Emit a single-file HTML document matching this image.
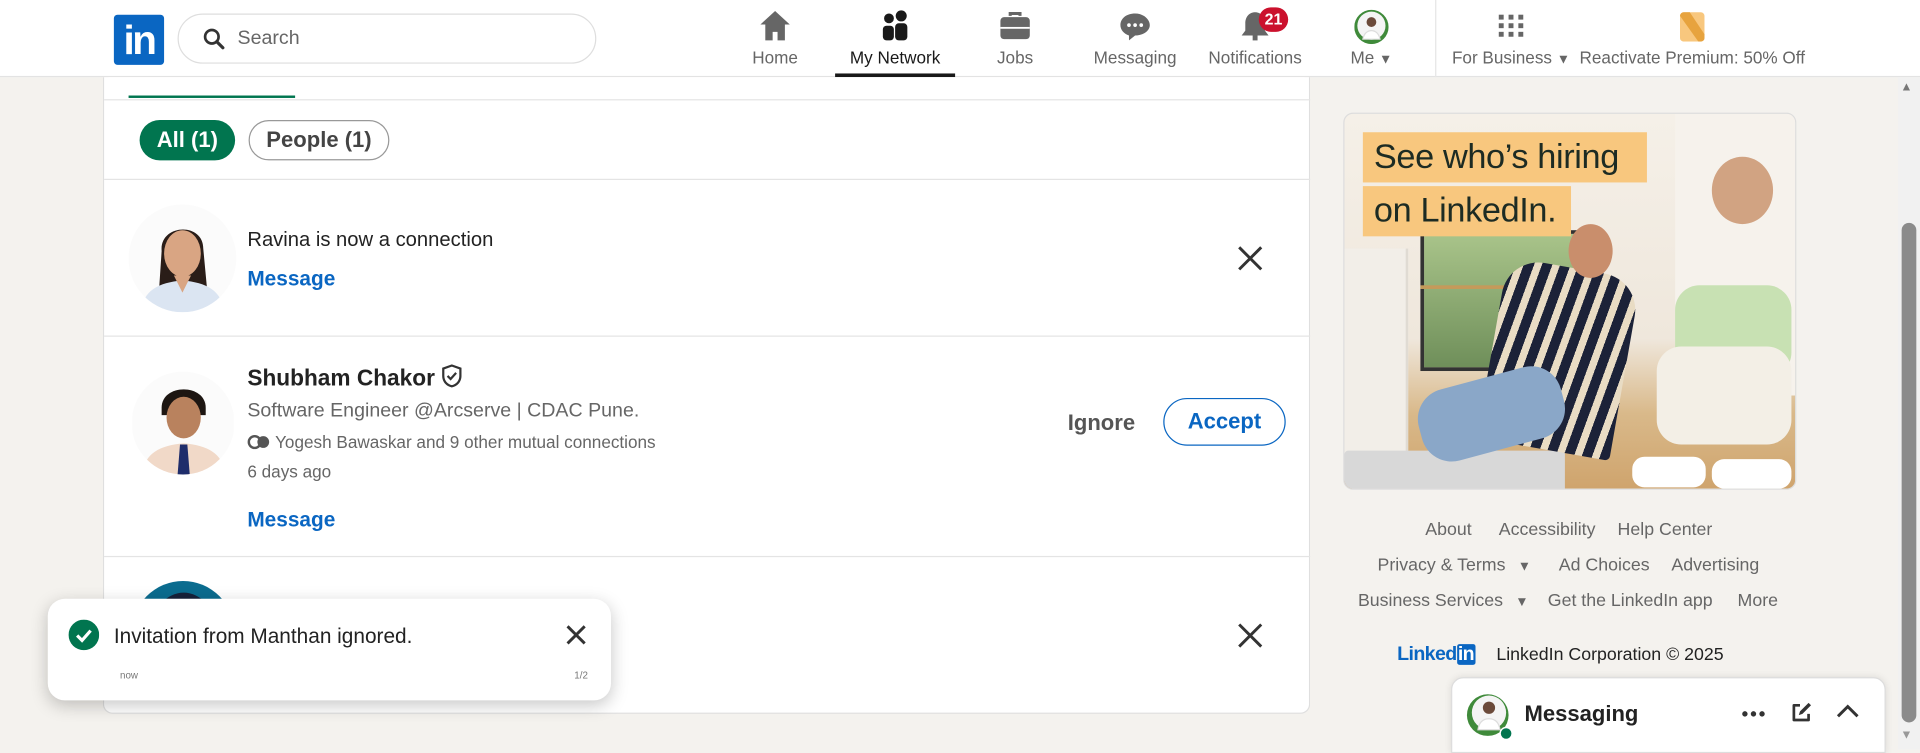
<!DOCTYPE html>
<html><head><meta charset="utf-8">
<style>
*{box-sizing:border-box;margin:0;padding:0}
html,body{width:1920px;height:749px;overflow:hidden;background:#f4f2ee;font-family:"Liberation Sans",sans-serif}
#w{position:absolute;left:0;top:0;width:1568px;height:612px;transform:scale(1.22449);transform-origin:0 0;background:#f4f2ee}
.a{position:absolute}
.nav{left:0;top:0;width:1568px;height:63px;background:#fff;border-bottom:1px solid #e3e3e3}
.ni{position:absolute;top:8px;width:98px;text-align:center;font-size:14px;color:#666}
.ni svg{display:block;margin:0 auto 3px}
.lbl{position:absolute;top:31px;left:0;width:100%;text-align:center;white-space:nowrap}
.t{position:absolute;white-space:nowrap}
.line{position:absolute;left:0;width:985px;height:1px;background:#e4e4e4}
.foot{font-size:14.5px;color:#666}
</style></head><body><div id="w">

<div class="a nav">
  <div class="a" style="left:93px;top:12px;width:41px;height:41px;background:#0a66c2;border-radius:3px;color:#fff;font-weight:bold;font-size:33px;line-height:41px;text-align:center;letter-spacing:-2px">in</div>
  <div class="a" style="left:145px;top:11px;width:342px;height:41px;border:1px solid #dedede;border-radius:21px">
    <svg class="a" style="left:20px;top:11px" width="18" height="18" viewBox="0 0 18 18"><circle cx="7" cy="7" r="5.5" fill="none" stroke="#333" stroke-width="2.2"/><path d="M11 11l5 5" stroke="#333" stroke-width="2.6" stroke-linecap="round"/></svg>
    <span class="t" style="left:48px;top:11px;font-size:16px;color:#666">Search</span>
  </div>
  <div class="ni" style="left:584px"><svg width="28" height="26" viewBox="0 0 28 26"><path d="M14 1L2 12h4v13h6v-7h4v7h6V12h4z" fill="#666"/></svg><div class="lbl">Home</div></div>
  <div class="ni" style="left:682px;color:#191919"><svg width="28" height="26" viewBox="0 0 28 26"><circle cx="9" cy="7" r="4" fill="#191919"/><circle cx="19" cy="5" r="4.5" fill="#191919"/><rect x="4" y="13" width="9" height="12" rx="3" fill="#191919"/><rect x="14" y="11" width="10" height="14" rx="3" fill="#191919"/></svg><div class="lbl">My Network</div></div>
  <div class="a" style="left:682px;top:60px;width:98px;height:3px;background:#191919"></div>
  <div class="ni" style="left:780px"><svg width="28" height="26" viewBox="0 0 28 26"><path d="M10 5V3h8v2" fill="none" stroke="#666" stroke-width="2.5"/><rect x="2" y="6" width="24" height="18" rx="3" fill="#666"/><rect x="2" y="14" width="24" height="1.5" fill="#fff"/></svg><div class="lbl">Jobs</div></div>
  <div class="ni" style="left:878px"><svg width="28" height="26" viewBox="0 0 28 26"><path d="M14 3C7 3 2 7 2 12.5c0 4 3 7 7 8.5v4l5-4c7 0 12-4 12-8.5S21 3 14 3z" fill="#666"/><circle cx="9" cy="12.5" r="1.5" fill="#fff"/><circle cx="14" cy="12.5" r="1.5" fill="#fff"/><circle cx="19" cy="12.5" r="1.5" fill="#fff"/></svg><div class="lbl">Messaging</div></div>
  <div class="ni" style="left:976px"><svg width="28" height="26" viewBox="0 0 28 26"><path d="M14 2c-5 0-8 4-8 9v6l-3 4h22l-3-4v-6c0-5-3-9-8-9z" fill="#666"/><rect x="12" y="21" width="4" height="4" fill="#666"/></svg><div class="lbl">Notifications</div>
    <div class="a" style="left:52px;top:-2px;width:24px;height:20px;border-radius:10px;background:#cb112d;color:#fff;font-size:13px;font-weight:bold;line-height:20px;text-align:center">21</div></div>
  <div class="ni" style="left:1071px"><svg width="28" height="28" viewBox="0 0 28 28"><circle cx="14" cy="14" r="14" fill="#3f8a3a"/><circle cx="14" cy="13" r="11.5" fill="#f4f4f4"/><circle cx="14" cy="10" r="4" fill="#6b4a3a"/><path d="M7 24c1-5 4-7 7-7s6 2 7 7z" fill="#fff" stroke="#ddd"/></svg><div class="lbl">Me <span style="font-size:11px">▼</span></div></div>
  <div class="a" style="left:1172px;top:0;width:1px;height:63px;background:#e6e6e6"></div>
  <div class="ni" style="left:1184px;width:100px"><svg width="24" height="26" viewBox="0 0 24 26"><g fill="#666"><rect x="2" y="4" width="4" height="4"/><rect x="10" y="4" width="4" height="4"/><rect x="18" y="4" width="4" height="4"/><rect x="2" y="11" width="4" height="4"/><rect x="10" y="11" width="4" height="4"/><rect x="18" y="11" width="4" height="4"/><rect x="2" y="18" width="4" height="4"/><rect x="10" y="18" width="4" height="4"/><rect x="18" y="18" width="4" height="4"/></g></svg><div class="lbl">For Business <span style="font-size:11px">▼</span></div></div>
  <div class="ni" style="left:1287px;width:190px"><svg width="24" height="26" viewBox="0 0 24 26"><rect x="2" y="2" width="20" height="24" rx="3" fill="#f8c77e"/><path d="M5 2h5l12 18v3a3 3 0 0 1-3 3h-2L2 5V5a3 3 0 0 1 3-3z" fill="#e7a33e"/></svg><div class="lbl">Reactivate Premium: 50% Off</div></div>
</div>

<div class="a" style="left:84px;top:63px;width:986px;height:520px;background:#fff;border:1px solid #dfdfdf;border-top:none;border-radius:0 0 8px 8px">
  <div class="a" style="left:20px;top:15px;width:136px;height:2px;background:#01754f"></div>
  <div class="line" style="top:18px"></div>
  <div class="a" style="left:29px;top:35px;width:78px;height:33px;border-radius:17px;background:#01754f;color:#fff;font-size:18px;font-weight:bold;line-height:33px;text-align:center">All (1)</div>
  <div class="a" style="left:118px;top:35px;width:115px;height:33px;border-radius:17px;border:1px solid #999;color:#444;font-size:18px;font-weight:bold;line-height:31px;text-align:center">People (1)</div>
  <div class="line" style="top:83px"></div>

  <svg class="a" style="left:20px;top:104px" width="88" height="88" viewBox="0 0 88 88"><defs><clipPath id="c1"><circle cx="44" cy="44" r="44"/></clipPath></defs><g clip-path="url(#c1)"><rect width="88" height="88" fill="#fbfbfb"/><path d="M27 38c-2-22 34-24 34-2l3 32-9-2-20 0-10 2z" fill="#2a1d18"/><ellipse cx="44" cy="40" rx="15" ry="19" fill="#d9a583"/><path d="M10 88c2-18 14-24 34-26 20 2 32 8 34 26z" fill="#dbe5f2"/><path d="M37 58h14l-7 14z" fill="#d9a583"/></g></svg>
  <div class="t" style="left:117px;top:124px;font-size:16.5px;color:#222">Ravina is now a connection</div>
  <div class="t" style="left:117px;top:155px;font-size:17px;font-weight:bold;color:#0a66c2">Message</div>
  <svg class="a" style="left:925px;top:137px" width="22" height="22" viewBox="0 0 22 22"><path d="M2 2l18 18M20 2L2 20" stroke="#333" stroke-width="2.4"/></svg>
  <div class="line" style="top:211px"></div>

  <svg class="a" style="left:23px;top:240px" width="83" height="85" viewBox="0 0 83 85"><defs><clipPath id="c2"><circle cx="41.5" cy="42.5" r="42"/></clipPath></defs><g clip-path="url(#c2)"><rect width="83" height="85" fill="#fbfbfb"/><path d="M24 30c0-20 36-20 36 0v6H24z" fill="#1d1612"/><ellipse cx="42" cy="38" rx="14" ry="17" fill="#b9825e"/><path d="M8 85c2-18 14-24 34-26 20 2 32 8 34 26z" fill="#f1d9c8"/><path d="M39 60h6l2 25h-10z" fill="#1f2d6b"/></g></svg>
  <div class="t" style="left:117px;top:234px;font-size:18.5px;font-weight:bold;color:#222">Shubham Chakor <svg width="18" height="20" viewBox="0 0 18 20" style="vertical-align:-2px"><path d="M9 1.5l7 2.5v6c0 4.5-3 7.5-7 8.5-4-1-7-4-7-8.5V4z" fill="none" stroke="#333" stroke-width="1.8"/><path d="M5.5 10l2.5 2.5 4.5-5" fill="none" stroke="#333" stroke-width="1.8"/></svg></div>
  <div class="t" style="left:117px;top:264px;font-size:16px;color:#666">Software Engineer @Arcserve | CDAC Pune.</div>
  <div class="t" style="left:117px;top:290px;font-size:14px;color:#666"><svg width="19" height="12" viewBox="0 0 19 12" style="vertical-align:-1px"><circle cx="6" cy="6" r="4.8" fill="none" stroke="#555" stroke-width="2"/><circle cx="13" cy="6" r="4.8" fill="#555"/></svg> Yogesh Bawaskar and 9 other mutual connections</div>
  <div class="t" style="left:117px;top:314px;font-size:14px;color:#666">6 days ago</div>
  <div class="t" style="left:117px;top:352px;font-size:17px;font-weight:bold;color:#0a66c2">Message</div>
  <div class="t" style="left:787px;top:272px;font-size:18px;font-weight:bold;color:#555">Ignore</div>
  <div class="a" style="left:865px;top:262px;width:100px;height:39px;border:1.5px solid #0a66c2;border-radius:20px;color:#0a66c2;font-size:18px;font-weight:bold;line-height:36px;text-align:center">Accept</div>
  <div class="line" style="top:391px"></div>

  <svg class="a" style="left:23px;top:411px" width="83" height="60" viewBox="0 0 83 60"><circle cx="41.5" cy="42.5" r="42" fill="#0b6c8f"/><ellipse cx="42" cy="40" rx="26" ry="30" fill="#16213a"/></svg>
  <svg class="a" style="left:925px;top:445px" width="22" height="22" viewBox="0 0 22 22"><path d="M2 2l18 18M20 2L2 20" stroke="#333" stroke-width="2.4"/></svg>
</div>

<div class="a" style="left:39px;top:489px;width:460px;height:83px;background:#fff;border-radius:14px;box-shadow:0 4px 14px rgba(0,0,0,.22)">
  <svg class="a" style="left:17px;top:17px" width="25" height="25" viewBox="0 0 25 25"><circle cx="12.5" cy="12.5" r="12.5" fill="#01754f"/><path d="M7 13l4 4 7-8" fill="none" stroke="#fff" stroke-width="2.6"/></svg>
  <div class="t" style="left:54px;top:21px;font-size:17px;color:#222">Invitation from Manthan ignored.</div>
  <svg class="a" style="left:423px;top:21px" width="17" height="17" viewBox="0 0 17 17"><path d="M1.5 1.5l14 14M15.5 1.5l-14 14" stroke="#333" stroke-width="2.4"/></svg>
  <div class="t" style="left:59px;top:58px;font-size:8px;color:#777">now</div>
  <div class="t" style="left:430px;top:58px;font-size:8px;color:#777">1/2</div>
</div>

<div class="a" style="left:1097px;top:92px;width:370px;height:308px;border-radius:8px;overflow:hidden;border:1px solid #ddd;background:linear-gradient(180deg,#f5f0e8 0%,#efe7dc 60%,#d9b98a 80%,#cfa46d 100%)">
  <div class="a" style="left:62px;top:95px;width:140px;height:115px;background:linear-gradient(180deg,#a9c48a,#6f8f5a);border:3px solid #333"></div>
  <div class="a" style="left:62px;top:140px;width:140px;height:3px;background:#c49a5a"></div>
  <div class="a" style="left:0;top:110px;width:52px;height:180px;background:#f2eee8;border-right:2px solid #e0dbd3"></div>
  <div class="a" style="left:270px;top:0;width:100px;height:230px;background:#f6f2ec"></div>
  <div class="a" style="left:0;top:275px;width:180px;height:35px;background:#d8d8d8;border-radius:3px"></div>
  <div class="a" style="left:120px;top:125px;width:110px;height:150px;background:repeating-linear-gradient(100deg,#1c2238 0 8px,#e9dcc4 8px 14px);border-radius:30px 30px 4px 4px;transform:rotate(10deg)"></div>
  <div class="a" style="left:60px;top:215px;width:120px;height:60px;background:#8aa7c8;border-radius:25px;transform:rotate(-15deg)"></div>
  <div class="a" style="left:183px;top:90px;width:36px;height:44px;background:#c98e6c;border-radius:50%"></div>
  <div class="a" style="left:270px;top:140px;width:95px;height:75px;background:#c8e1b3;border-radius:20px"></div>
  <div class="a" style="left:255px;top:190px;width:110px;height:80px;background:#f3efe6;border-radius:20px"></div>
  <div class="a" style="left:300px;top:35px;width:50px;height:55px;background:#d1a382;border-radius:50%"></div>
  <div class="a" style="left:235px;top:280px;width:60px;height:25px;background:#fff;border-radius:10px"></div>
  <div class="a" style="left:300px;top:282px;width:65px;height:24px;background:#fff;border-radius:10px"></div>
  <div class="a" style="left:15px;top:15px;width:232px;height:41px;background:#f8c77e"></div>
  <div class="t" style="left:24px;top:19px;font-size:28px;color:#1d2b23;letter-spacing:-.3px">See who’s hiring</div>
  <div class="a" style="left:15px;top:59px;width:170px;height:41px;background:#f8c77e"></div>
  <div class="t" style="left:24px;top:63px;font-size:28px;color:#1d2b23;letter-spacing:-.3px">on LinkedIn.</div>
</div>

<div class="t foot" style="left:1164px;top:425px">About</div>
<div class="t foot" style="left:1224px;top:425px">Accessibility</div>
<div class="t foot" style="left:1321px;top:425px">Help Center</div>
<div class="t foot" style="left:1125px;top:454px">Privacy &amp; Terms <span style="font-size:11px;margin-left:6px">▼</span></div>
<div class="t foot" style="left:1273px;top:454px">Ad Choices</div>
<div class="t foot" style="left:1365px;top:454px">Advertising</div>
<div class="t foot" style="left:1109px;top:483px">Business Services <span style="font-size:11px;margin-left:6px">▼</span></div>
<div class="t foot" style="left:1264px;top:483px">Get the LinkedIn app</div>
<div class="t foot" style="left:1419px;top:483px">More</div>
<div class="t" style="left:1141px;top:526px;font-size:16px;font-weight:bold;color:#0a66c2;letter-spacing:-.5px">Linked<span style="background:#0a66c2;color:#fff;padding:0 1px;border-radius:2px">in</span></div>
<div class="t" style="left:1222px;top:527px;font-size:14.5px;color:#222">LinkedIn Corporation © 2025</div>

<div class="a" style="left:1185px;top:553px;width:355px;height:62px;background:#fff;border:1px solid #ddd;border-radius:10px 10px 0 0;box-shadow:0 0 6px rgba(0,0,0,.1)">
  <svg class="a" style="left:11px;top:12px" width="40" height="40" viewBox="0 0 40 40"><circle cx="18" cy="18" r="17" fill="#3f8a3a"/><circle cx="19" cy="16" r="14" fill="#f4f4f4"/><circle cx="19" cy="12" r="5" fill="#6b4a3a"/><path d="M10 30c1-7 5-9 9-9s8 2 9 9z" fill="#fff" stroke="#ddd"/><circle cx="33" cy="33" r="5.5" fill="#fff"/><circle cx="33" cy="33" r="4.3" fill="#01754f"/></svg>
  <div class="t" style="left:59px;top:19px;font-size:18px;font-weight:bold;color:#222">Messaging</div>
  <svg class="a" style="left:236px;top:26px" width="20" height="6" viewBox="0 0 20 6"><circle cx="3" cy="3" r="2.2" fill="#333"/><circle cx="10" cy="3" r="2.2" fill="#333"/><circle cx="17" cy="3" r="2.2" fill="#333"/></svg>
  <svg class="a" style="left:276px;top:19px" width="18" height="18" viewBox="0 0 18 18"><path d="M8 3H3v12h12v-5" fill="none" stroke="#333" stroke-width="2.2" stroke-linejoin="round"/><path d="M7 11l1-3 7-7 2 2-7 7z" fill="#333"/></svg>
  <svg class="a" style="left:313px;top:21px" width="20" height="12" viewBox="0 0 20 12"><path d="M2 10l8-8 8 8" fill="none" stroke="#333" stroke-width="2.4"/></svg>
</div>

<div class="a" style="left:1550px;top:63px;width:18px;height:549px;background:#f1f1f1"></div>
<div class="a" style="left:1553px;top:182px;width:12px;height:408px;background:#8b8b8b;border-radius:6px"></div>
<div class="t" style="left:1552px;top:66px;font-size:10px;color:#777">▲</div>
<div class="t" style="left:1552px;top:595px;font-size:10px;color:#999">▼</div>
</div></body></html>
